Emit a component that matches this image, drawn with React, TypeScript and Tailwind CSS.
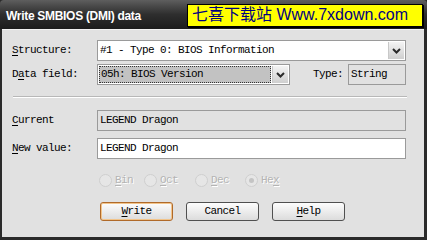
import React from 'react';

const mono = { fontFamily: '"Liberation Mono", "Noto Sans CJK SC", monospace' };

function U({ children }: { children: React.ReactNode }) {
  return <span className="underline underline-offset-2">{children}</span>;
}

function Chevron() {
  return (
    <svg width="9" height="6" viewBox="0 0 9 6">
      <path d="M1 1 L4.5 4.5 L8 1" stroke="#2a2a2a" strokeWidth="2" fill="none" />
    </svg>
  );
}

function DropBtn() {
  return (
    <div className="w-[16px] h-full flex items-center justify-center bg-gradient-to-b from-[#f4f4f4] to-[#cfcfcf] border-l border-[#c8c8c8]">
      <Chevron />
    </div>
  );
}

function Radio({ label, checked }: { label: React.ReactNode; checked?: boolean }) {
  return (
    <div className="flex items-center gap-[3px] text-[#b4b4b4]">
      <div className="w-[13px] h-[13px] rounded-full border border-[#cfcfcf] bg-[#e6e6e6] flex items-center justify-center">
        {checked && <div className="w-[5px] h-[5px] rounded-full bg-[#c4c4c4]" />}
      </div>
      <span className="[text-shadow:1px_1px_0_#fff]">{label}</span>
    </div>
  );
}

function Btn({ children, def }: { children: React.ReactNode; def?: boolean }) {
  return (
    <div
      className={`w-[73px] h-[19px] rounded-[3px] border flex items-center justify-center bg-gradient-to-b from-[#fdfdfd] to-[#dcdcdc] text-black ${
        def ? 'border-[#b06a2a] shadow-[inset_0_0_0_1px_#f2c48a]' : 'border-[#505050]'
      }`}
    >
      {children}
    </div>
  );
}

export default function App() {
  return (
    <div className="w-[427px] h-[240px] bg-[#2a2a2a] flex flex-col overflow-hidden text-[11px] tracking-[-0.6px]" style={mono}>
      {/* Title bar */}
      <div className="h-[29px] shrink-0 rounded-t-[4px] bg-gradient-to-b from-[#5e5e5e] via-[#2e2e2e] to-[#1c1c1c] flex items-center pl-[6px] pr-[4px] justify-between">
        <span
          className="text-white font-bold text-[12px] tracking-[-0.3px] mt-[3px]"
          style={{ fontFamily: '"Liberation Sans", Arial, sans-serif' }}
        >
          Write SMBIOS (DMI) data
        </span>
        <div
          className="h-[23px] w-[236px] mt-[1px] bg-[#ffff00] border border-black shadow-[1px_1px_0_#000] flex items-center pl-[4px] text-[#000080] text-[16px] tracking-normal leading-none"
          style={{ fontFamily: '"Liberation Sans", "Noto Sans CJK SC", Arial, sans-serif' }}
        >
          七喜下载站 Www.7xdown.com
        </div>
      </div>

      {/* Body */}
      <div className="flex-1 mx-[2px] mr-[3px] mb-[3px] bg-[#e1e1e1] border-t border-[#f2f2f2] text-black flex flex-col pl-[10px] pr-[18px] pt-[10px]">
        <div className="flex items-center h-[21px]">
          <div className="w-[85px]"><U>S</U>tructure:</div>
          <div className="flex-1 h-[21px] bg-white border border-[#9a9a9a] flex items-center">
            <div className="flex-1 pl-[2px]">#1 - Type 0: BIOS Information</div>
            <div className="h-full py-[1px] pr-[1px]"><DropBtn /></div>
          </div>
        </div>

        <div className="flex items-center h-[21px] mt-[3px]">
          <div className="w-[85px]">D<U>a</U>ta field:</div>
          <div className="w-[193px] h-[21px] bg-white border border-[#9a9a9a] flex items-center">
            <div className="flex-1 h-full p-[1px]">
              <div className="h-full bg-[#c2c2c2] border border-dotted border-[#333] flex items-center pl-[1px]">05h: BIOS Version</div>
            </div>
            <div className="h-full py-[1px] pr-[1px]"><DropBtn /></div>
          </div>
          <div className="ml-[23px] w-[35px]">Type:</div>
          <div className="flex-1 h-[21px] border border-[#9a9a9a] flex items-center pl-[2px]">String</div>
        </div>

        <div className="mt-[11px] border-t border-[#b8b8b8] border-b border-b-white ml-[1px] mr-[-1px]" />

        <div className="flex items-center h-[21px] mt-[12px]">
          <div className="w-[85px]"><U>C</U>urrent</div>
          <div className="flex-1 h-[21px] border border-[#9a9a9a] flex items-center pl-[2px]">LEGEND Dragon</div>
        </div>

        <div className="flex items-center h-[21px] mt-[7px]">
          <div className="w-[85px]"><U>N</U>ew value:</div>
          <div className="flex-1 h-[21px] bg-white border border-[#9a9a9a] flex items-center pl-[2px]">LEGEND Dragon</div>
        </div>

        <div className="flex items-center mt-[14px] pl-[87px] h-[14px]">
          <div className="w-[45px]"><Radio label={<><U>B</U>in</>} /></div>
          <div className="w-[51px]"><Radio label={<><U>O</U>ct</>} /></div>
          <div className="w-[50px]"><Radio label={<><U>D</U>ec</>} /></div>
          <Radio checked label={<>He<U>x</U></>} />
        </div>

        <div className="flex items-center gap-[13px] mt-[15px] pl-[88px]">
          <Btn def><U>W</U>rite</Btn>
          <Btn>Cancel</Btn>
          <Btn><U>H</U>elp</Btn>
        </div>
      </div>
    </div>
  );
}
